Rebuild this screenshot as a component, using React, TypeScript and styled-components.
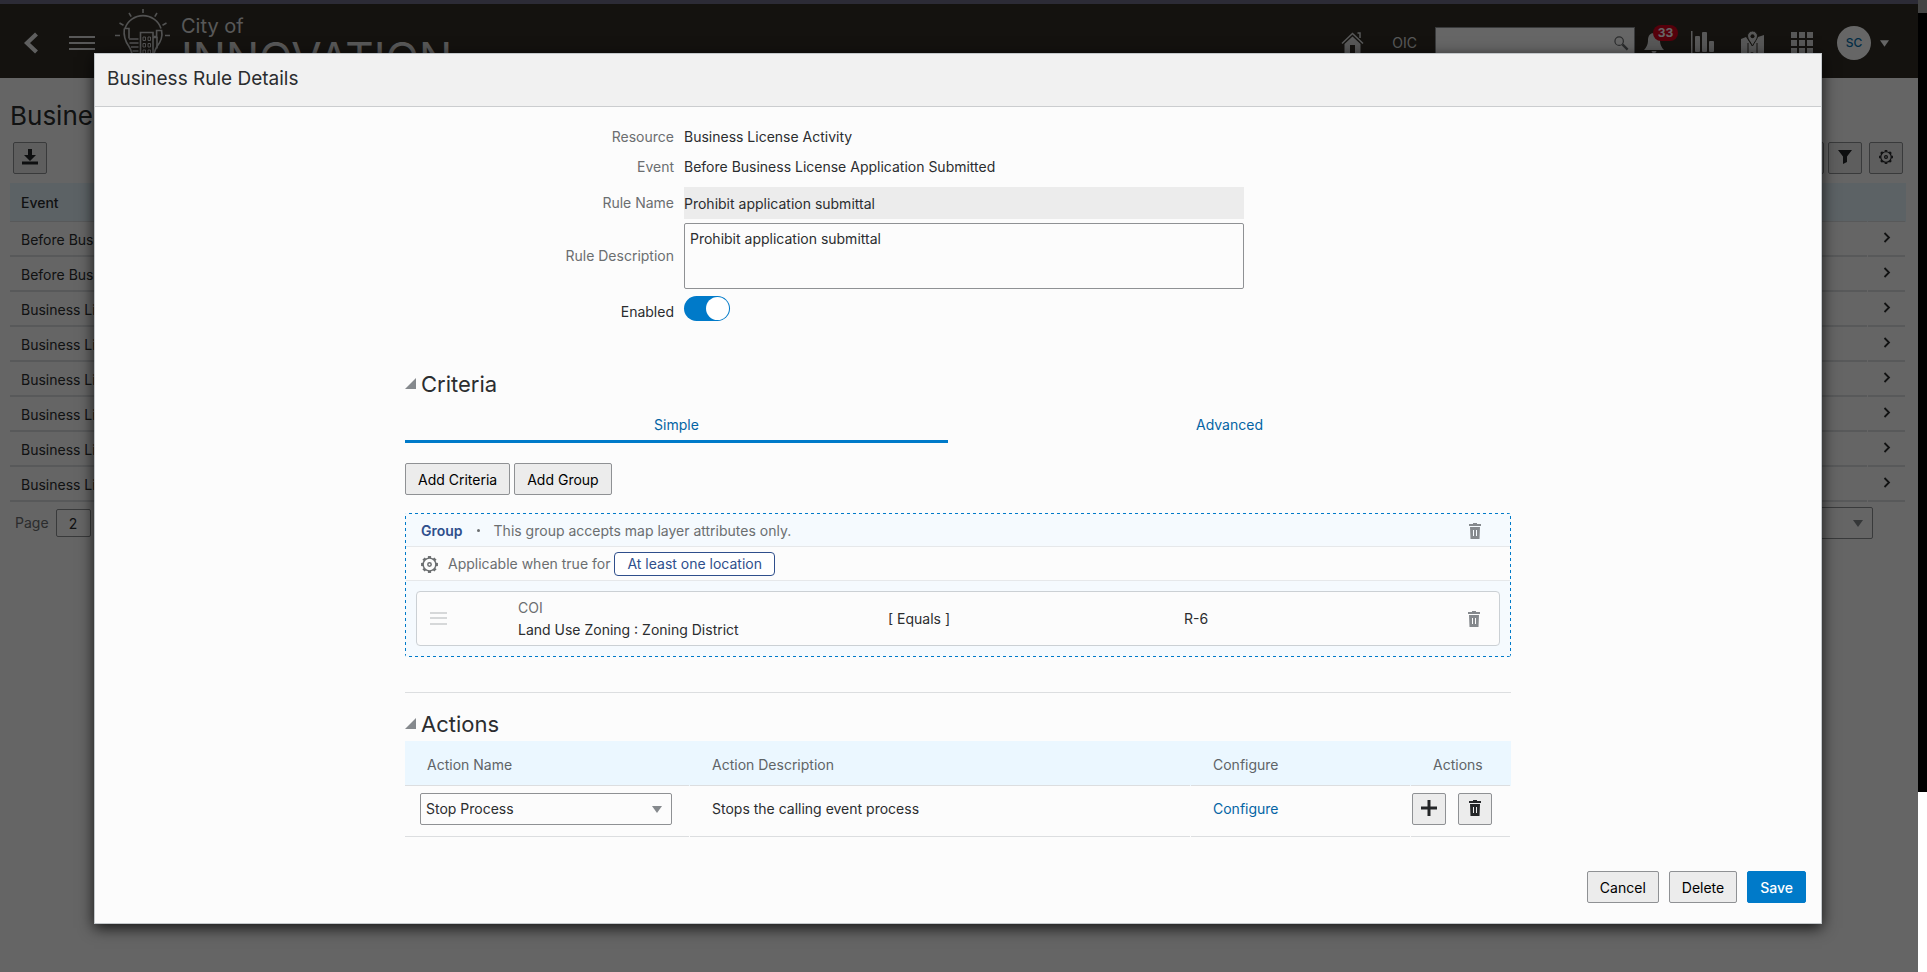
import React from "react";
import styled, { createGlobalStyle, css } from "styled-components";

const colors = {
  ink: "#2b2d2f",
  muted: "#6b6e70",
  link: "#0464a4",
  accent: "#007ac9",
  navy: "#2f4f8c",
  line: "#dcdee0",
  border: "#8f9194",
  panel: "#fcfcfc",
  button: "#ececec",
  tableHead: "#ebf7ff",
  groupTint: "#f5fafe",
};

const GlobalStyle = createGlobalStyle`
  *, *::before, *::after { box-sizing: border-box; }
  body {
    margin: 0;
    background: #fff;
    color: ${colors.ink};
    font-family: Inter, "Liberation Sans", Arial, sans-serif;
    font-size: 14px;
    line-height: 20px;
  }
  button, input, select, textarea { font: inherit; color: inherit; }
  button { cursor: pointer; }
  svg { display: block; }
`;

/* ---------- Page shell ---------- */

const Page = styled.div`
  display: flex;
  min-height: 100vh;
`;

const Workspace = styled.div`
  position: relative;
  flex: 1;
  min-width: 0;
  overflow: hidden;
  background: ${colors.panel};
`;

const EdgeStrip = styled.div`
  flex: 0 0 9px;
  display: grid;
  grid-template-rows: 13px 779px 1fr;
`;

const EdgePart = styled.div<{ $tone: string }>`
  background: ${({ $tone }) => $tone};
`;

/* ---------- Header bar ---------- */

const TopBar = styled.header`
  display: flex;
  align-items: center;
  height: 78px;
  padding: 4px 29px 0 24px;
  border-top: 4px solid #6e6c88;
  background: #322f27;
  color: #fff;
`;

const PlainButton = styled.button`
  display: flex;
  align-items: center;
  justify-content: center;
  padding: 0;
  border: 0;
  background: none;
  color: inherit;
`;

const MenuButton = styled(PlainButton)`
  margin-left: 31px;
`;

const Brand = styled.div`
  display: flex;
  align-items: flex-start;
  align-self: flex-start;
  gap: 10px;
  margin-left: 20px;
`;

const BrandName = styled.div`
  display: flex;
  flex-direction: column;
  padding-top: 6px;
  color: #ddd;
`;

const BrandLine = styled.span<{ $large?: boolean }>`
  font-size: ${({ $large }) => ($large ? 44 : 20)}px;
  line-height: ${({ $large }) => ($large ? 40 : 24)}px;
`;

const TopTools = styled.div`
  display: flex;
  align-items: center;
  margin-left: auto;
`;

const OrgLink = styled.a`
  margin: 0 18px 0 28px;
  color: #ddd;
  text-decoration: none;
`;

const SearchBox = styled.label`
  display: flex;
  align-items: center;
  width: 200px;
  height: 32px;
  padding-right: 5px;
  border: 1px solid #8f9194;
  background: #fff;
  color: #6b6e70;
`;

const SearchInput = styled.input`
  flex: 1;
  min-width: 0;
  border: 0;
  background: none;
`;

const NavIcons = styled.div`
  display: flex;
  align-items: center;
  gap: 27px;
  margin: 0 24px 0 9px;
`;

const BellButton = styled(PlainButton)`
  position: relative;
`;

const Badge = styled.span`
  position: absolute;
  top: -8px;
  left: 9px;
  width: 25px;
  height: 16px;
  border-radius: 8px;
  background: #d6001c;
  color: #fff;
  font-size: 12px;
  font-weight: 700;
  line-height: 16px;
`;

const Avatar = styled.span`
  width: 34px;
  height: 34px;
  margin-right: 9px;
  border-radius: 50%;
  background: #fff;
  color: #0572ae;
  font-size: 12px;
  font-weight: 500;
  line-height: 34px;
`;

/* ---------- Rule list behind the dialog ---------- */

const ListArea = styled.main`
  padding: 21px 12px 0 10px;
`;

const ListTitle = styled.h1`
  margin: 0;
  font-size: 26px;
  font-weight: 400;
  line-height: 34px;
`;

const Toolbar = styled.div`
  display: flex;
  gap: 7px;
  margin: 9px 3px;
`;

const ToolbarSpacer = styled.div`
  flex: 1;
`;

const FilterButtons = styled.div`
  display: flex;
  gap: 4px;
`;

const cellRule = css`
  background-image: linear-gradient(
    to right,
    ${colors.line} calc(100% - 1px),
    transparent calc(100% - 1px)
  );
  background-position: bottom;
  background-repeat: no-repeat;
`;

const DataTable = styled.table`
  width: 100%;
  border-collapse: collapse;
  table-layout: fixed;
  text-align: left;
`;

const ListHeadCell = styled.th`
  height: 39px;
  padding: 0 11px;
  ${cellRule}
  background-color: #e6f5fd;
  background-size: 100% 1px;
  font-weight: 500;
`;

const ListCell = styled.td<{ $open?: boolean }>`
  height: 35px;
  padding: ${({ $open }) => ($open ? "0 0 4px 15px" : "0 11px")};
  ${cellRule}
  background-size: 100% 2px;
  white-space: nowrap;
`;

const Pager = styled.div`
  display: flex;
  align-items: center;
  gap: 7px;
  padding: 5px 33px 0 5px;
  color: ${colors.muted};
`;

const PageInput = styled.input`
  width: 35px;
  height: 28px;
  padding: 0;
  border: 1px solid ${colors.border};
  border-radius: 2px;
  background: #fff;
  color: ${colors.ink};
  text-align: center;
`;

/* ---------- Dialog ---------- */

const Backdrop = styled.div`
  position: absolute;
  inset: 0;
  padding: 53px 96px 48px 94px;
  background: rgba(0, 0, 0, 0.6);
`;

const Dialog = styled.section`
  border: 1px solid #c4c8cb;
  background: ${colors.panel};
  box-shadow: 0 4px 14px rgba(0, 0, 0, 0.8);
`;

const DialogTitle = styled.h2`
  margin: 0;
  padding: 12px 12px 14px;
  border-bottom: 1px solid #cbcdcf;
  background: #f1f1f1;
  font-size: 19px;
  font-weight: 400;
  line-height: 26px;
`;

const Column = styled.div`
  margin: 0 310px;
`;

const RuleForm = styled.div`
  display: grid;
  grid-template-columns: 269fr 560fr 257fr;
  grid-template-rows: 30px 30px 41px 66px 39px;
  column-gap: 10px;
  align-items: center;
  padding-top: 15px;
`;

const FieldLabel = styled.label<{ $strong?: boolean }>`
  grid-column: 1;
  padding-top: ${({ $strong }) => ($strong ? 6 : 0)}px;
  color: ${({ $strong }) => ($strong ? colors.ink : colors.muted)};
  text-align: right;
`;

const fieldColumn = css`
  grid-column: 2;
  width: 100%;
`;

const FieldValue = styled.output`
  ${fieldColumn}
`;

const ReadOnlyInput = styled.input`
  ${fieldColumn}
  height: 32px;
  padding: 2px 0 0;
  border: 0;
  background: #ececec;
`;

const DescriptionInput = styled.textarea`
  ${fieldColumn}
  display: block;
  height: 66px;
  padding: 5px;
  border: 1px solid ${colors.border};
  border-radius: 2px;
  background: ${colors.panel};
  resize: none;
`;

const Toggle = styled.input`
  grid-column: 2;
  width: 46px;
  height: 25px;
  margin: 0;
  padding: 1px;
  border-radius: 13px;
  background: #8f9194;
  appearance: none;
  cursor: pointer;

  &::before {
    content: "";
    display: block;
    width: 23px;
    height: 23px;
    border-radius: 50%;
    background: #fff;
  }
  &:checked {
    background: ${colors.accent};
  }
  &:checked::before {
    margin-left: auto;
  }
`;

const SectionHeading = styled.h3`
  display: flex;
  align-items: center;
  gap: 5px;
  margin: 0;
  font-size: 22px;
  font-weight: 400;
  line-height: 30px;
`;

const CriteriaSection = styled.section`
  margin-top: 41px;
`;

const TabList = styled.div`
  display: grid;
  grid-template-columns: 543fr 563fr;
  margin-bottom: 20px;
`;

const Tab = styled.button<{ $active?: boolean }>`
  height: 44px;
  padding: 10px 0 0;
  border: 0;
  border-bottom: 3px solid ${({ $active }) => ($active ? colors.accent : "transparent")};
  background: none;
  color: ${colors.link};
`;

const ButtonRow = styled.div`
  display: flex;
  gap: 4px;
`;

const Button = styled.button<{ $primary?: boolean }>`
  height: 32px;
  padding: 1px 12px 0;
  border: 1px solid ${({ $primary }) => ($primary ? colors.accent : colors.border)};
  border-radius: 2px;
  background: ${({ $primary }) => ($primary ? colors.accent : colors.button)};
  color: ${({ $primary }) => ($primary ? "#fff" : "#000")};
  font-weight: ${({ $primary }) => ($primary ? 500 : 400)};
`;

const IconButton = styled.button`
  display: flex;
  align-items: center;
  justify-content: center;
  width: 34px;
  height: 32px;
  padding: 0 0 2px;
  border: 1px solid ${colors.border};
  border-radius: 2px;
  background: ${colors.button};
  color: #242628;
`;

const dashAcross = `linear-gradient(to right, ${colors.accent} 50%, transparent 50%)`;
const dashDown = `linear-gradient(to bottom, ${colors.accent} 50%, transparent 50%)`;

const GroupBox = styled.div`
  margin-top: 18px;
  padding: 1px;
  border-radius: 3px;
  background:
    ${dashAcross} top / 6px 1px repeat-x,
    ${dashAcross} bottom / 6px 1px repeat-x,
    ${dashDown} left / 1px 6px repeat-y,
    ${dashDown} right / 1px 6px repeat-y,
    ${colors.groupTint};
`;

const GroupRow = styled.div<{ $plain?: boolean }>`
  display: flex;
  align-items: center;
  height: ${({ $plain }) => ($plain ? 34 : 33)}px;
  padding: 1px 29px 0 15px;
  border-bottom: 1px solid #e6e8ea;
  background: ${({ $plain }) => ($plain ? colors.panel : "transparent")};
  color: ${colors.muted};
`;

const GroupName = styled.strong`
  color: ${colors.navy};
  font-weight: 600;
`;

const Dot = styled.span`
  width: 3px;
  height: 3px;
  margin: 0 14px;
  border-radius: 50%;
  background: ${colors.muted};
`;

const ConditionText = styled.span`
  margin: 0 4px 0 10px;
`;

const OutlineButton = styled.button`
  height: 24px;
  padding: 0 12px;
  border: 1px solid ${colors.navy};
  border-radius: 4px;
  background: #fff;
  color: ${colors.navy};
  line-height: 22px;
`;

const MutedIconButton = styled(PlainButton)`
  color: #85898d;
`;

const PushRight = styled.div`
  margin-left: auto;
`;

const CriterionCard = styled.div`
  display: grid;
  grid-template-columns: 88fr 370fr 296fr 284fr 12px;
  align-items: center;
  height: 55px;
  margin: 10px;
  padding: 0 19px 0 13px;
  border: 1px solid #cbd0d4;
  border-radius: 4px;
  background: ${colors.panel};
`;

const CriterionField = styled.div`
  line-height: 22px;
`;

const CriterionSource = styled.div`
  color: ${colors.muted};
`;

const ActionsSection = styled.section`
  margin-top: 35px;
  padding-top: 16px;
  border-top: 1px solid ${colors.line};
`;

const ActionHeadCell = styled.th`
  height: 45px;
  padding: 3px 0 0 22px;
  ${cellRule}
  background-color: ${colors.tableHead};
  background-size: 100% 1px;
  color: #5f6467;
  font-weight: 400;
`;

const ActionCell = styled.td<{ $control?: boolean }>`
  height: 51px;
  padding: ${({ $control }) => ($control ? "0 18px 5px 15px" : "0 0 5px 22px")};
  ${cellRule}
  background-size: 100% 1px;
`;

const ActionButtons = styled.div`
  display: flex;
  gap: 12px;
`;

const ActionButtonCell = styled(ActionCell)`
  padding-left: 1px;
`;

const ActionTable = styled(DataTable)`
  margin-top: 2px;
`;

const SelectFrame = styled.div<{ $narrow?: boolean }>`
  display: grid;
  align-items: center;
  width: ${({ $narrow }) => ($narrow ? "110px" : "100%")};
  margin-left: ${({ $narrow }) => ($narrow ? "auto" : "0")};

  > * {
    grid-area: 1 / 1;
  }
  > svg {
    justify-self: end;
    margin-right: 10px;
    color: #85898d;
    pointer-events: none;
  }
`;

const Select = styled.select`
  width: 100%;
  height: 32px;
  padding: 0 24px 0 5px;
  border: 1px solid ${colors.border};
  border-radius: 2px;
  background: ${colors.panel};
  appearance: none;
`;

const TextLink = styled.a`
  color: ${colors.link};
  text-decoration: none;
`;

const DialogFooter = styled.footer`
  display: flex;
  justify-content: flex-end;
  gap: 10px;
  padding: 34px 15px 20px;
`;

/* ---------- Icons ---------- */

const CityLogo = () => (
  <svg width="56" height="66" viewBox="0 0 56 66" fill="none" stroke="#ccc" strokeWidth="1.6">
    <path d="M28 1v4M14 5l2.200 3.600M42 5l-2.200 3.600M4.500 15l4 2.200M51.500 15l-4 2.200M0 27.500h5M50 27.500h5" />
    <path d="M10 20.500A19 19 0 0 1 46 20.500" />
    <path d="M9.300 20.500h4.700v10M9.300 20.500c-1 8 1 13 4.700 18 2.500 4 3.500 7 3.500 12.500h21c0-5.500 1-8.500 3.500-12.500 4-5 5.800-10 4.600-16h-5v6h-3" />
    <path d="M25.500 51V24.500h12.500V51M38.500 29.500h3.500v11M14 31h9.500M14.500 35h9M16 39h7.500M17.500 43h6M18 57h20M22 62h12" />
    <path d="M28 29h2.500v3.500H28zM33 29h2.500v3.500H33zM28 35.500h2.500V39H28zM33 35.500h2.500V39H33zM28 42h2.500v3.500H28zM33 42h2.500v3.500H33z" strokeWidth="1" />
  </svg>
);

const BackIcon = () => (
  <svg width="14" height="22" viewBox="0 0 14 22" fill="none" stroke="#eee" strokeWidth="4.200">
    <path d="M12.500 2L3 11l9.500 9" />
  </svg>
);

const MenuIcon = () => (
  <svg width="26" height="16" viewBox="0 0 26 16" fill="#ddd">
    <path d="M0 1h26v2H0zM0 7h26v2H0zM0 13h26v2H0z" />
  </svg>
);

const HomeIcon = () => (
  <svg width="23" height="22" viewBox="0 0 23 22">
    <path d="M1 11.500L11.500 1.500 22 11.500M16.500 1h2.500v5" fill="none" stroke="#ddd" strokeWidth="1.500" />
    <path d="M11.500 4.500L19.500 12v9H14v-8H9v8H3.500v-9z" fill="#ddd" />
  </svg>
);

const SearchIcon = () => (
  <svg width="15" height="15" viewBox="0 0 16 16" fill="none" stroke="currentColor">
    <circle cx="5.500" cy="5.500" r="4.500" strokeWidth="1.300" />
    <path d="M9 9l5.500 5.500" strokeWidth="2.500" />
  </svg>
);

const BellIcon = () => (
  <svg width="20" height="20" viewBox="0 0 20 20" fill="#ddd">
    <path d="M10 0c4 0 6 3 6 7 0 5 1.500 7 4 10H0c2.500-3 4-5 4-10 0-4 2-7 6-7zM7.500 18h5a2.500 2 0 0 1-5 0z" />
  </svg>
);

const BarsIcon = () => (
  <svg width="23" height="24" viewBox="0 0 23 24" fill="#ddd">
    <path d="M0 0h1.500v24H0zM0 22.500h23V24H0z" />
    <rect x="4" y="5" width="5" height="16" rx="1" />
    <rect x="11" y="1" width="5" height="20" rx="1" />
    <rect x="18" y="10" width="5" height="11" rx="1" />
  </svg>
);

const MapIcon = () => (
  <svg width="23" height="24" viewBox="0 0 23 24">
    <path d="M0 8l5-2 6 9 6-9 6-2v18l-6 2-6-3-6 3-5-2z" fill="#ddd" />
    <path d="M7 12v11M16 12v11" stroke="#322f27" />
    <path d="M11.500 0a5 5 0 0 1 5 5c0 3-3 6-5 10-2-4-5-7-5-10a5 5 0 0 1 5-5z" fill="#ddd" stroke="#322f27" />
    <circle cx="11.500" cy="5.200" r="2" fill="#322f27" />
  </svg>
);

const GridIcon = () => (
  <svg width="22" height="22" viewBox="0 0 22 22" fill="#ddd">
    {[0, 8, 16].map((y) =>
      [0, 8, 16].map((x) => <rect key={`${x}-${y}`} x={x} y={y} width="6" height="6" />)
    )}
  </svg>
);

const CaretIcon = ({ size = 10 }: { size?: number }) => (
  <svg width={size} height="7" viewBox="0 0 10 7" fill="currentColor">
    <path d="M0 0h10L5 7z" />
  </svg>
);

const DownloadIcon = () => (
  <svg width="16" height="16" viewBox="0 0 16 16" fill="currentColor">
    <path d="M6 0h4v6h4l-6 6-6-6h4zM0 12.500h16V15.500H0z" />
  </svg>
);

const FilterIcon = () => (
  <svg width="14" height="14" viewBox="0 0 14 14" fill="currentColor">
    <path d="M0 0h14L9 6.500V12l-4 2V6.500z" />
  </svg>
);

const ViewIcon = () => (
  <svg width="14" height="14" viewBox="0 0 14 14" fill="currentColor">
    <path d="M0 1h14v2H0zM0 6h14v2H0zM0 11h14v2H0z" />
  </svg>
);

const teeth = [0, 45, 90, 135, 180, 225, 270, 315];

const GearIcon = ({ size = 17 }: { size?: number }) => (
  <svg width={size} height={size} viewBox="0 0 16 16" fill="none" stroke="currentColor">
    <circle cx="8" cy="8" r="6" strokeWidth="1.400" />
    {teeth.map((angle) => (
      <path key={angle} d="M6.500 1h3" strokeWidth="1.900" transform={`rotate(${angle} 8 8)`} />
    ))}
    <circle cx="8" cy="8" r="1.600" strokeWidth="1.400" />
  </svg>
);

const ChevronIcon = () => (
  <svg width="8" height="11" viewBox="0 0 8 11" fill="none" stroke="currentColor" strokeWidth="1.800">
    <path d="M1.500 1l4.500 4.500L1.500 10" />
  </svg>
);

const DisclosureIcon = () => (
  <svg width="11" height="12" viewBox="0 0 11 12" fill="#85898d">
    <path d="M11 0v11H0z" />
  </svg>
);

const TrashIcon = () => (
  <svg width="12" height="16" viewBox="0 0 12 16" fill="currentColor">
    <path d="M4 0h4v1h4v2H0V1h4z" />
    <path fillRule="evenodd" d="M1 4h10l-.500 12h-9zM4 7v6h1V7zM7 7v6h1V7z" />
  </svg>
);

const PlusIcon = () => (
  <svg width="16" height="16" viewBox="0 0 16 16" fill="currentColor">
    <path d="M6.500 0h3v6.500H16v3H9.500V16h-3V9.500H0v-3h6.500z" />
  </svg>
);

const DragIcon = () => (
  <svg width="17" height="13" viewBox="0 0 17 13" fill="#d6d8d9">
    <path d="M0 0h17v2H0zM0 5h17v2H0zM0 11h17v2H0z" />
  </svg>
);

/* ---------- Views ---------- */

const events = [
  "Before Business License Submitted",
  "Before Business License Renewed",
  "Business License Activity",
  "Business License Applied",
  "Business License Approved",
  "Business License Issued",
  "Business License Renewed",
  "Business License Updated",
];

const AppHeader = () => (
  <TopBar>
    <PlainButton aria-label="Back"><BackIcon /></PlainButton>
    <MenuButton aria-label="Menu"><MenuIcon /></MenuButton>
    <Brand>
      <CityLogo />
      <BrandName>
        <BrandLine>City of</BrandLine>
        <BrandLine $large>INNOVATION</BrandLine>
      </BrandName>
    </Brand>
    <TopTools>
      <PlainButton aria-label="Home"><HomeIcon /></PlainButton>
      <OrgLink href="#oic">OIC</OrgLink>
      <SearchBox>
        <SearchInput type="search" aria-label="Search" />
        <SearchIcon />
      </SearchBox>
      <NavIcons>
        <BellButton aria-label="Notifications">
          <BellIcon />
          <Badge>33</Badge>
        </BellButton>
        <PlainButton aria-label="Reports"><BarsIcon /></PlainButton>
        <PlainButton aria-label="Map"><MapIcon /></PlainButton>
        <PlainButton aria-label="Applications"><GridIcon /></PlainButton>
      </NavIcons>
      <PlainButton aria-label="Account">
        <Avatar>SC</Avatar>
        <CaretIcon size={9} />
      </PlainButton>
    </TopTools>
  </TopBar>
);

const RuleList = () => (
  <ListArea>
    <ListTitle>Business Rules</ListTitle>
    <Toolbar>
      <IconButton aria-label="Download"><DownloadIcon /></IconButton>
      <ToolbarSpacer />
      <FilterButtons>
        <IconButton aria-label="View"><ViewIcon /></IconButton>
        <IconButton aria-label="Filter"><FilterIcon /></IconButton>
      </FilterButtons>
      <IconButton aria-label="Settings"><GearIcon size={14} /></IconButton>
    </Toolbar>
    <DataTable>
      <colgroup>
        <col />
        <col width="38" />
      </colgroup>
      <thead>
        <tr>
          <ListHeadCell scope="col">Event</ListHeadCell>
          <ListHeadCell aria-label="Open" />
        </tr>
      </thead>
      <tbody>
        {events.map((event) => (
          <tr key={event}>
            <ListCell>{event}</ListCell>
            <ListCell $open>
              <PlainButton aria-label={`Open ${event}`}><ChevronIcon /></PlainButton>
            </ListCell>
          </tr>
        ))}
      </tbody>
    </DataTable>
    <Pager>
      <label htmlFor="page">Page</label>
      <PageInput id="page" defaultValue="2" />
      <SelectFrame $narrow>
        <Select aria-label="Sort" />
        <CaretIcon />
      </SelectFrame>
    </Pager>
  </ListArea>
);

const RuleDetails = () => (
  <RuleForm>
    <FieldLabel htmlFor="resource">Resource</FieldLabel>
    <FieldValue id="resource">Business License Activity</FieldValue>
    <FieldLabel htmlFor="event">Event</FieldLabel>
    <FieldValue id="event">Before Business License Application Submitted</FieldValue>
    <FieldLabel htmlFor="rule-name">Rule Name</FieldLabel>
    <ReadOnlyInput id="rule-name" readOnly value="Prohibit application submittal" />
    <FieldLabel htmlFor="rule-description">Rule Description</FieldLabel>
    <DescriptionInput id="rule-description" defaultValue="Prohibit application submittal" />
    <FieldLabel htmlFor="enabled" $strong>Enabled</FieldLabel>
    <Toggle id="enabled" type="checkbox" role="switch" defaultChecked />
  </RuleForm>
);

const Criteria = () => (
  <CriteriaSection>
    <SectionHeading><DisclosureIcon />Criteria</SectionHeading>
    <TabList role="tablist">
      <Tab role="tab" aria-selected $active>Simple</Tab>
      <Tab role="tab" aria-selected={false}>Advanced</Tab>
    </TabList>
    <ButtonRow>
      <Button>Add Criteria</Button>
      <Button>Add Group</Button>
    </ButtonRow>
    <GroupBox>
      <GroupRow>
        <GroupName>Group</GroupName>
        <Dot />
        <span>This group accepts map layer attributes only.</span>
        <PushRight>
          <MutedIconButton aria-label="Delete group"><TrashIcon /></MutedIconButton>
        </PushRight>
      </GroupRow>
      <GroupRow $plain>
        <GearIcon />
        <ConditionText>Applicable when true for</ConditionText>
        <OutlineButton>At least one location</OutlineButton>
      </GroupRow>
      <CriterionCard>
        <DragIcon />
        <CriterionField>
          <CriterionSource>COI</CriterionSource>
          <div>Land Use Zoning : Zoning District</div>
        </CriterionField>
        <span>[ Equals ]</span>
        <span>R-6</span>
        <MutedIconButton aria-label="Delete criterion"><TrashIcon /></MutedIconButton>
      </CriterionCard>
    </GroupBox>
  </CriteriaSection>
);

const Actions = () => (
  <ActionsSection>
    <SectionHeading><DisclosureIcon />Actions</SectionHeading>
    <ActionTable>
      <colgroup>
        <col width="285" />
        <col />
        <col width="220" />
        <col width="100" />
      </colgroup>
      <thead>
        <tr>
          <ActionHeadCell scope="col">Action Name</ActionHeadCell>
          <ActionHeadCell scope="col">Action Description</ActionHeadCell>
          <ActionHeadCell scope="col">Configure</ActionHeadCell>
          <ActionHeadCell scope="col">Actions</ActionHeadCell>
        </tr>
      </thead>
      <tbody>
        <tr>
          <ActionCell $control>
            <SelectFrame>
              <Select aria-label="Action Name" defaultValue="stop">
                <option value="stop">Stop Process</option>
              </Select>
              <CaretIcon />
            </SelectFrame>
          </ActionCell>
          <ActionCell>Stops the calling event process</ActionCell>
          <ActionCell><TextLink href="#configure">Configure</TextLink></ActionCell>
          <ActionButtonCell>
            <ActionButtons>
              <IconButton aria-label="Add action"><PlusIcon /></IconButton>
              <IconButton aria-label="Delete action"><TrashIcon /></IconButton>
            </ActionButtons>
          </ActionButtonCell>
        </tr>
      </tbody>
    </ActionTable>
  </ActionsSection>
);

export default function App() {
  return (
    <>
      <GlobalStyle />
      <Page>
        <Workspace>
          <AppHeader />
          <RuleList />
          <Backdrop>
            <Dialog role="dialog" aria-labelledby="dialog-title">
              <DialogTitle id="dialog-title">Business Rule Details</DialogTitle>
              <Column>
                <RuleDetails />
                <Criteria />
                <Actions />
              </Column>
              <DialogFooter>
                <Button>Cancel</Button>
                <Button>Delete</Button>
                <Button $primary>Save</Button>
              </DialogFooter>
            </Dialog>
          </Backdrop>
        </Workspace>
        <EdgeStrip>
          <EdgePart $tone="#444" />
          <EdgePart $tone="#000" />
          <EdgePart $tone="#fff" />
        </EdgeStrip>
      </Page>
    </>
  );
}
